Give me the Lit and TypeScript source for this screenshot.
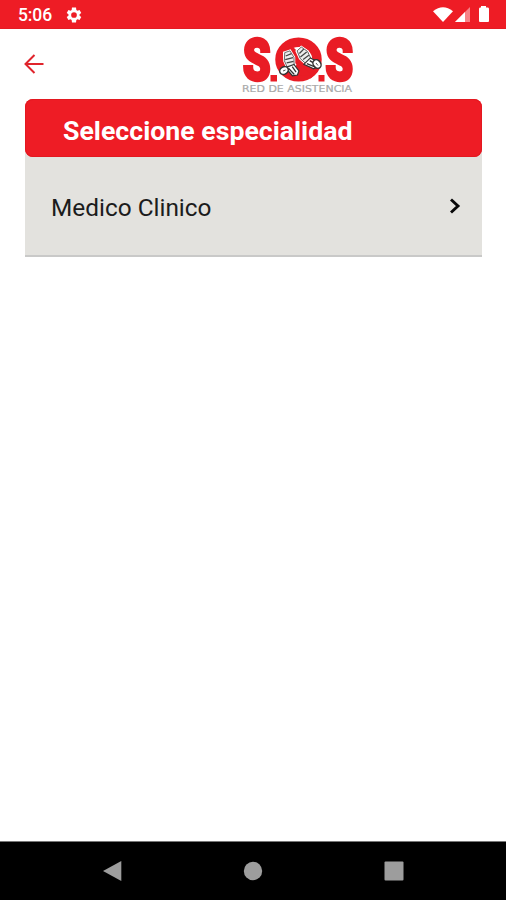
import { LitElement, html, svg, css } from "lit";
import { customElement } from "lit/decorators.js";

const leg = svg`
  <path d="M-4-13 2-14 5-7 4 1-3 2-5-5Z" fill="#fff" stroke="#fff" stroke-width="2.500"/>
  <path d="M-3.500-13 2-14 5-7 4 1-3 2-5-5Z" fill="#eee" stroke="#555" stroke-width=".8"/>
  <path d="M-3-9.500 3-11M-4-6 4-7M-3-2.500 4-3" stroke="#444" stroke-width="1.300"/>
  <path d="M-5 2 4 0 8 7 6 11 1 11Z" fill="#fff" stroke="#333" stroke-width="1.200"/>
  <path d="M-2 3 3 10M2 2 5 8" stroke="#333" stroke-width="1.300"/>`;

@customElement("app-root")
export class AppRoot extends LitElement {
  static styles = css`
    :host {
      display: flex;
      flex-direction: column;
      height: 900px;
      background: #fff;
      font-family: Roboto, sans-serif;
      overflow: hidden;
    }
    svg { display: block; flex: none; }
    .status {
      height: 29px;
      box-sizing: border-box;
      padding: 2px 15px 0 18px;
      display: flex;
      align-items: center;
      background: #ee1c25;
      border-bottom: 1px solid #e51b23;
      color: #fff;
    }
    .time { font-size: 17.5px; font-weight: 500; width: 47px; letter-spacing: -0.1px; }
    .signals { margin-left: auto; }
    .bar {
      height: 70px;
      display: flex;
      align-items: flex-start;
      justify-content: space-between;
      padding: 1px 153px 0 24px;
      box-sizing: border-box;
    }
    .back { margin-top: 24px; }
    .logo { overflow: visible; }
    .sos { font: 900 58px Roboto, sans-serif; }
    .tag { font: 400 9px "DejaVu Sans", sans-serif; }
    main { flex: 1; padding: 0 24px 0 25px; }
    .card { background: #e3e2de; border-bottom: 2px solid #c9c9c8; }
    .wrap { background: linear-gradient(#fff 50%, #e3e2de 50%); }
    h1 {
      margin: 0;
      height: 58px;
      box-sizing: border-box;
      padding: 2px 0 0 38px;
      font-size: 26.7px;
      line-height: 60px;
      font-weight: 700;
      color: #fff;
      background: #ee1c25;
      border-radius: 8px;
      box-shadow: inset 0 0 0 1px #e31820;
      white-space: nowrap;
    }
    .row {
      height: 98px;
      display: flex;
      align-items: center;
      justify-content: space-between;
      padding: 0 21px 0 26px;
      color: #1c1c1c;
      font-size: 24.4px;
    }
    .label { padding-top: 2px; }
    nav {
      height: 59px;
      box-sizing: border-box;
      border-top: 1px solid #777;
      background: #000;
      display: flex;
      align-items: center;
      justify-content: space-between;
      padding: 0 102px 0 102px;
    }
  `;

  render() {
    return html`
      <header class="status">
        <span class="time">5:06</span>
        <svg width="18" height="18" viewBox="0 0 24 24" fill="#fff">
          <path fill-rule="evenodd" d="M19.4 13c.1-.6.1-1.300 0-2l2.300-1.700-2.300-4-2.700 1.100-1.600-1L14.700 2H9.300l-.4 3.400-1.600 1-2.700-1.100-2.300 4L4.600 11v2l-2.300 1.700 2.300 4 2.700-1.100 1.600 1 .4 3.400h5.400l.4-3.400 1.600-1 2.700 1.100 2.300-4ZM12 8.200a3.800 3.800 0 1 1 0 7.600 3.800 3.800 0 0 1 0-7.600Z"/>
        </svg>
        <svg class="signals" width="58" height="20" viewBox="0 0 58 20">
          <path d="M0 6.200Q10-1.800 20 6.200L10 17Z" fill="#fff"/>
          <path d="M22 17 37 2V17Z" fill="#f78287"/>
          <path d="M22 17 32 7V17Z" fill="#fff"/>
          <path d="M48 2.500V1h5v1.500h2Q56 2.500 56 4V16Q56 17 55 17H47Q46 17 46 16V4Q46 2.500 47 2.500Z" fill="#fff"/>
        </svg>
      </header>
      <div class="bar">
        <svg class="back" width="20" height="20" viewBox="0 0 20 20" fill="none" stroke="#e0242c" stroke-width="2">
          <path d="M19.500 10H2M10.500 1 1.500 10l9 9"/>
        </svg>
        <svg class="logo" width="135" height="69" viewBox="218 30 135 69">
          <g class="sos" fill="#e91c25" stroke="#e91c25" stroke-width="3.400">
            <text x="243" y="80" textLength="27.500" lengthAdjust="spacingAndGlyphs">S</text>
            <text x="325.500" y="80" textLength="27.500" lengthAdjust="spacingAndGlyphs">S</text>
          </g>
          <rect x="270.500" y="75" width="6.500" height="6.500" fill="#e91c25"/>
          <rect x="318.500" y="75" width="6" height="6.500" fill="#e91c25"/>
          <ellipse cx="298.500" cy="59.500" rx="18.500" ry="17.300" fill="#fff" stroke="#e91c25" stroke-width="9.500"/>
          <path d="M284 45 314 75" stroke="#e91c25" stroke-width="10"/>
          <path d="M290 76 298 62 312 75Z" fill="#e91c25"/>
          <g transform="translate(290 65) rotate(-8)">${leg}</g>
          <g transform="translate(307 60) rotate(-32)">${leg}</g>
          <g fill="#fff" stroke="#333" stroke-width="1.500">
            <ellipse cx="284" cy="70.500" rx="4.500" ry="3.600" transform="rotate(-32 284 70.500)"/>
            <ellipse cx="317" cy="64" rx="4.700" ry="3.600" transform="rotate(52 317 64)"/>
          </g>
          <path d="M283 71l2.500-1M316 63l2 2.500" stroke="#555" stroke-width="1"/>
          <text class="tag" x="242" y="91.700" fill="#a9a9a9" stroke="#a9a9a9" stroke-width=".2" textLength="110" lengthAdjust="spacingAndGlyphs">RED DE ASISTENCIA</text>
        </svg>
      </div>
      <main>
        <section class="card">
          <div class="wrap"><h1>Seleccione especialidad</h1></div>
          <div class="row">
            <span class="label">Medico Clinico</span>
            <svg width="12" height="16" viewBox="0 0 12 16" fill="none" stroke="#080808" stroke-width="2.900">
              <path d="M2 1.500 9 8l-7 6.500"/>
            </svg>
          </div>
        </section>
      </main>
      <nav>
        <svg width="20" height="22" viewBox="0 0 20 22"><path d="M1 11 19.300 1V21Z" fill="#9d9d9d"/></svg>
        <svg width="20" height="20" viewBox="0 0 20 20"><circle cx="10" cy="10" r="9.200" fill="#9d9d9d"/></svg>
        <svg width="20" height="20" viewBox="0 0 20 20"><rect x=".5" y=".5" width="19" height="19" rx="1" fill="#9d9d9d"/></svg>
      </nav>
    `;
  }
}
